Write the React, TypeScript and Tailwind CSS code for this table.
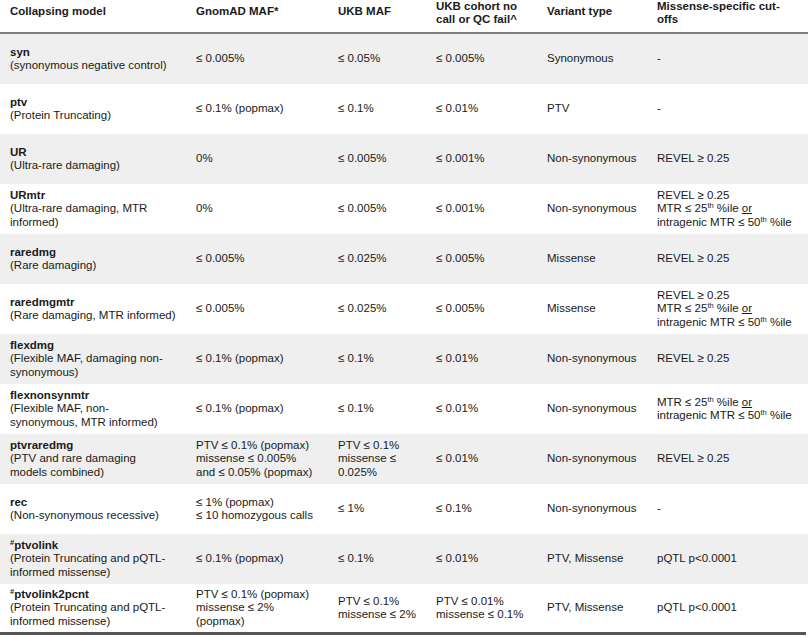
import type { ReactNode } from 'react';

// column widths picked off the screenshot
const COLS = 'grid grid-cols-[186px_142px_98px_111px_110px_161px]';

type Row = {
  name: ReactNode;
  desc: ReactNode;
  gnomad: ReactNode;
  ukb: ReactNode;
  cohort: ReactNode;
  variant: string;
  cutoff: ReactNode;
  h?: string;
};

const Th = ({ children }: { children: ReactNode }) => <sup className="text-[7.5px] leading-none relative -top-[4px]">{children}</sup>;

const Mtr = () => (
  <>
    MTR ≤ 25<Th>th</Th> %ile <span className="underline">or</span>
    <br />
    intragenic MTR ≤ 50<Th>th</Th> %ile
  </>
);

const rows: Row[] = [
  { name: 'syn', desc: '(synonymous negative control)', gnomad: '≤ 0.005%', ukb: '≤ 0.05%', cohort: '≤ 0.005%', variant: 'Synonymous', cutoff: '-' },
  { name: 'ptv', desc: '(Protein Truncating)', gnomad: '≤ 0.1% (popmax)', ukb: '≤ 0.1%', cohort: '≤ 0.01%', variant: 'PTV', cutoff: '-' },
  { name: 'UR', desc: '(Ultra-rare damaging)', gnomad: '0%', ukb: '≤ 0.005%', cohort: '≤ 0.001%', variant: 'Non-synonymous', cutoff: 'REVEL ≥ 0.25' },
  {
    name: 'URmtr',
    desc: (
      <>
        (Ultra-rare damaging, MTR
        <br />
        informed)
      </>
    ),
    gnomad: '0%',
    ukb: '≤ 0.005%',
    cohort: '≤ 0.001%',
    variant: 'Non-synonymous',
    cutoff: (
      <>
        REVEL ≥ 0.25
        <br />
        <Mtr />
      </>
    ),
  },
  { name: 'raredmg', desc: '(Rare damaging)', gnomad: '≤ 0.005%', ukb: '≤ 0.025%', cohort: '≤ 0.005%', variant: 'Missense', cutoff: 'REVEL ≥ 0.25' },
  {
    name: 'raredmgmtr',
    desc: '(Rare damaging, MTR informed)',
    gnomad: '≤ 0.005%',
    ukb: '≤ 0.025%',
    cohort: '≤ 0.005%',
    variant: 'Missense',
    cutoff: (
      <>
        REVEL ≥ 0.25
        <br />
        <Mtr />
      </>
    ),
  },
  {
    name: 'flexdmg',
    desc: (
      <>
        (Flexible MAF, damaging non-
        <br />
        synonymous)
      </>
    ),
    gnomad: '≤ 0.1% (popmax)',
    ukb: '≤ 0.1%',
    cohort: '≤ 0.01%',
    variant: 'Non-synonymous',
    cutoff: 'REVEL ≥ 0.25',
  },
  {
    name: 'flexnonsynmtr',
    desc: (
      <>
        (Flexible MAF, non-
        <br />
        synonymous, MTR informed)
      </>
    ),
    gnomad: '≤ 0.1% (popmax)',
    ukb: '≤ 0.1%',
    cohort: '≤ 0.01%',
    variant: 'Non-synonymous',
    cutoff: <Mtr />,
  },
  {
    name: 'ptvraredmg',
    desc: (
      <>
        (PTV and rare damaging
        <br />
        models combined)
      </>
    ),
    gnomad: (
      <>
        PTV ≤ 0.1% (popmax)
        <br />
        missense ≤ 0.005%
        <br />
        and ≤ 0.05% (popmax)
      </>
    ),
    ukb: (
      <>
        PTV ≤ 0.1%
        <br />
        missense ≤
        <br />
        0.025%
      </>
    ),
    cohort: '≤ 0.01%',
    variant: 'Non-synonymous',
    cutoff: 'REVEL ≥ 0.25',
  },
  {
    name: 'rec',
    desc: '(Non-synonymous recessive)',
    gnomad: (
      <>
        ≤ 1% (popmax)
        <br />≤ 10 homozygous calls
      </>
    ),
    ukb: '≤ 1%',
    cohort: '≤ 0.1%',
    variant: 'Non-synonymous',
    cutoff: '-',
  },
  {
    name: (
      <>
        <Th>#</Th>ptvolink
      </>
    ),
    desc: (
      <>
        (Protein Truncating and pQTL-
        <br />
        informed missense)
      </>
    ),
    gnomad: '≤ 0.1% (popmax)',
    ukb: '≤ 0.1%',
    cohort: '≤ 0.01%',
    variant: 'PTV, Missense',
    cutoff: 'pQTL p<0.0001',
  },
  {
    name: (
      <>
        <Th>#</Th>ptvolink2pcnt
      </>
    ),
    desc: (
      <>
        (Protein Truncating and pQTL-
        <br />
        informed missense)
      </>
    ),
    gnomad: (
      <>
        PTV ≤ 0.1% (popmax)
        <br />
        missense ≤ 2%
        <br />
        (popmax)
      </>
    ),
    ukb: (
      <>
        PTV ≤ 0.1%
        <br />
        missense ≤ 2%
      </>
    ),
    cohort: (
      <>
        PTV ≤ 0.01%
        <br />
        missense ≤ 0.1%
      </>
    ),
    variant: 'PTV, Missense',
    cutoff: 'pQTL p<0.0001',
    h: 'h-[48px]',
  },
];

export default function App() {
  return (
    <div className="w-[808px] h-[637px] bg-white text-[#1a1a1a] text-[11.5px] leading-[13.3px] font-['Liberation_Sans',Arial,sans-serif] overflow-hidden">
      <div className={`${COLS} h-[34px] items-start font-bold border-b-2 border-[#7d7d7d]`}>
        <div className="pl-[10px] pt-[5px]">Collapsing model</div>
        <div className="pl-[10px] pt-[5px]">GnomAD MAF*</div>
        <div className="pl-[10px] pt-[5px]">UKB MAF</div>
        <div className="pl-[10px]">
          UKB cohort no
          <br />
          call or QC fail^
        </div>
        <div className="pl-[10px] pt-[5px]">Variant type</div>
        <div className="pl-[10px]">
          Missense-specific cut-
          <br />
          offs
        </div>
      </div>
      {rows.map((r, i) => (
        <div key={i} className={`${COLS} ${r.h ?? 'h-[50px]'} items-center ${i % 2 === 0 ? 'bg-[#efefef]' : 'bg-white'}`}>
          <div className="pl-[10px]">
            <div className="font-bold">{r.name}</div>
            <div>{r.desc}</div>
          </div>
          <div className="pl-[10px]">{r.gnomad}</div>
          <div className="pl-[10px]">{r.ukb}</div>
          <div className="pl-[10px]">{r.cohort}</div>
          <div className="pl-[10px]">{r.variant}</div>
          <div className="pl-[10px]">{r.cutoff}</div>
        </div>
      ))}
      <div className="h-[3px] w-[806px] bg-[#555]" />
    </div>
  );
}
